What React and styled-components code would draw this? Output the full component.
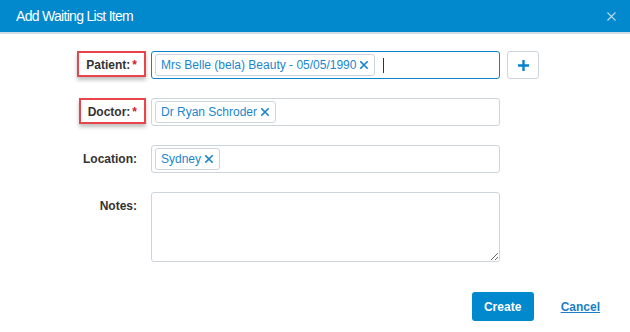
import React from 'react'
import styled, { createGlobalStyle } from 'styled-components'

const GlobalStyle = createGlobalStyle`
  html, body {
    margin: 0;
    padding: 0;
    background: #ffffff;
  }
  body {
    font-family: "Liberation Sans", Arial, sans-serif;
    color: #333;
  }
`

const Modal = styled.div`
  width: 630px;
  height: 332px;
  background: #fff;
  display: flex;
  flex-direction: column;
`

const Header = styled.div`
  height: 32px;
  background: #0288cc;
  border-bottom: 2px solid #cfdde6;
  display: flex;
  align-items: center;
  justify-content: space-between;
  padding: 0 14px 0 16px;
  box-sizing: content-box;
`

const Title = styled.h1`
  margin: 0;
  font-size: 14px;
  font-weight: normal;
  color: #fff;
  letter-spacing: -0.7px;
`

const Close = styled.button`
  border: 0;
  background: none;
  padding: 0;
  width: 10px;
  height: 10px;
  display: flex;
  align-items: center;
  justify-content: center;
  cursor: pointer;
`

const Form = styled.div`
  display: grid;
  grid-template-columns: 141px 349px auto;
  column-gap: 10px;
  row-gap: 19px;
  padding-top: 17px;
  align-items: start;
`

const Label = styled.label`
  position: relative;
  justify-self: end;
  padding: 6px 4px 0 0;
  font-size: 12px;
  line-height: 16px;
  font-weight: bold;
  color: #333;

  ${p => p.$flag && `
    &::after {
      content: '';
      position: absolute;
      left: -9px;
      right: -5px;
      top: 0;
      bottom: -4px;
      border: 2px solid #e8444e;
      box-shadow: 0 3px 4px rgba(0, 0, 0, 0.25);
      pointer-events: none;
    }
  `}
`

const Req = styled.span`
  color: #d0212b;
  margin-left: 2px;
`

const TagBox = styled.div`
  height: 28px;
  box-sizing: border-box;
  border: 1px solid ${p => p.$focus ? '#0a84c8' : '#ccd5dd'};
  border-radius: 3px;
  display: flex;
  align-items: center;
  padding: 0 3px;
  gap: 8px;
  background: #fff;
`

const Tag = styled.span`
  height: 22px;
  box-sizing: border-box;
  display: inline-flex;
  align-items: center;
  gap: 4px;
  padding: 0 6px 0 5px;
  border: 1px solid #ccd5dd;
  border-radius: 3px;
  font-size: 12px;
  color: #1a86cc;
  white-space: nowrap;
`

const Caret = styled.span`
  width: 1px;
  height: 15px;
  background: #333;
`

const AddButton = styled.button`
  width: 32px;
  height: 28px;
  box-sizing: border-box;
  margin-left: -3px;
  border: 1px solid #ccd5dd;
  border-radius: 3px;
  background: #fff;
  display: flex;
  align-items: center;
  justify-content: center;
  padding: 0;
`

const Notes = styled.textarea`
  height: 70px;
  box-sizing: border-box;
  border: 1px solid #ccd5dd;
  border-radius: 3px;
  resize: vertical;
  font-family: inherit;
  font-size: 12px;
  padding: 4px 6px;
  margin: 0;
  display: block;
`

const Footer = styled.div`
  display: flex;
  justify-content: flex-end;
  align-items: center;
  gap: 27px;
  padding: 30px 30px 0 0;
`

const Primary = styled.button`
  width: 62px;
  height: 29px;
  border: 0;
  border-radius: 3px;
  background: #0288cc;
  color: #fff;
  font-family: inherit;
  font-size: 12px;
  font-weight: bold;
  padding: 0;
`

const LinkButton = styled.a`
  font-size: 12px;
  font-weight: bold;
  color: #1a7fc6;
  text-decoration: underline;
  cursor: pointer;
`

const Cross = ({ size = 8, color = '#1a86cc', w = 1.6 }) => (
  <svg width={size} height={size} viewBox="0 0 8 8">
    <path d="M0.8 0.8 L7.2 7.2 M7.2 0.8 L0.8 7.2" stroke={color} strokeWidth={w} strokeLinecap="square" />
  </svg>
)

const Row = ({ label, req, flag, children, extra }) => (
  <>
    <Label $flag={flag}>
      {label}
      {req && <Req>*</Req>}
    </Label>
    {children}
    {extra || <span />}
  </>
)

export default function App() {
  return (
    <Modal>
      <GlobalStyle />
      <Header>
        <Title>Add Waiting List Item</Title>
        <Close aria-label="close">
          <Cross size={9} color="#b9dcf0" w={1.1} />
        </Close>
      </Header>
      <Form>
        <Row
          label="Patient:"
          req
          flag
          extra={
            <AddButton>
              <svg width="13" height="13" viewBox="0 0 13 13">
                <path d="M6.5 1 V12 M1 6.5 H12" stroke="#0a84c8" strokeWidth="2.4" />
              </svg>
            </AddButton>
          }
        >
          <TagBox $focus>
            <Tag>Mrs Belle (bela) Beauty - 05/05/1990 <Cross /></Tag>
            <Caret />
          </TagBox>
        </Row>
        <Row label="Doctor:" req flag>
          <TagBox>
            <Tag>Dr Ryan Schroder <Cross /></Tag>
          </TagBox>
        </Row>
        <Row label="Location:">
          <TagBox>
            <Tag>Sydney <Cross /></Tag>
          </TagBox>
        </Row>
        <Row label="Notes:">
          <Notes />
        </Row>
      </Form>
      <Footer>
        <Primary>Create</Primary>
        <LinkButton>Cancel</LinkButton>
      </Footer>
    </Modal>
  )
}
